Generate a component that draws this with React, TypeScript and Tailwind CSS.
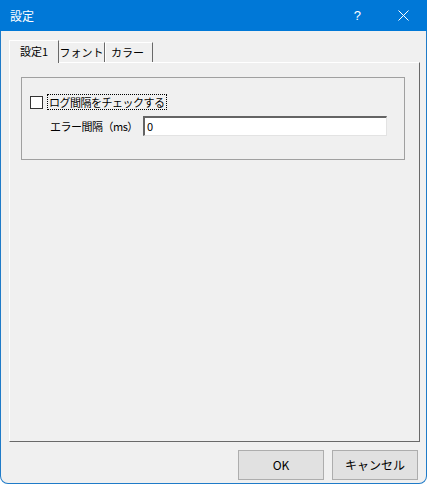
import React from "react";

const font = { fontFamily: '"Noto Sans CJK JP", "Noto Sans", sans-serif' };

export default function App() {
  return (
    <div
      className="w-[427px] h-[484px] bg-[#1f7bc8] rounded-b-[8px] overflow-hidden flex flex-col text-[11px] text-black"
      style={font}
    >
      {/* title bar */}
      <div className="h-[31px] bg-[#0078d7] flex items-center text-white shrink-0">
        <span className="ml-[10px] text-[12px] leading-none">設定</span>
        <span className="ml-auto mr-[37px] text-[13px] leading-none" style={{ fontFamily: '"Liberation Sans", sans-serif' }}>?</span>
        <svg width="11" height="11" viewBox="0 0 11 11" className="mr-[18px]">
          <path d="M0.5 0.5 L10.5 10.5 M10.5 0.5 L0.5 10.5" stroke="white" strokeWidth="1" />
        </svg>
      </div>
      {/* client */}
      <div className="flex-1 mx-[1px] mb-[1px] bg-[#f0f0f0] rounded-b-[7px] flex flex-col">
        {/* tabs */}
        <div className="flex items-end ml-[8px] mt-[9px] h-[22px] relative z-10">
          <div className="w-[50px] bg-[#f0f0f0] border-l border-t border-white border-r border-r-[#696969] flex items-center justify-center pb-[2px] -mb-[1px] h-[23px]">
            設定1
          </div>
          <div className="h-[20px] w-[46px] border-t border-white border-r border-r-[#696969] flex items-center justify-center">
            フォント
          </div>
          <div className="h-[20px] w-[48px] border-l border-t border-white border-r border-r-[#696969] flex items-center pl-[5px]">
            カラー
          </div>
        </div>
        {/* panel */}
        <div className="ml-[8px] w-[411px] h-[380px] border-l border-t border-white border-r border-b border-r-[#696969] border-b-[#696969] pt-[14px] pl-[11px]">
          <div className="w-[384px] h-[83px] border border-[#a0a0a0] pt-[17px] pl-[8px]">
            <div className="flex items-center h-[14px]">
              <div className="w-[13px] h-[13px] bg-white border border-[#333333]" />
              <span className="ml-[4px] px-[1px] border border-dotted border-black leading-[14px] tracking-[-0.5px]">ログ間隔をチェックする</span>
            </div>
            <div className="flex items-center mt-[7px]">
              <span className="ml-[20px] w-[93px] leading-none tracking-[-0.5px]">エラー間隔（ms）</span>
              <div className="w-[244px] h-[20px] bg-white border-l-2 border-t-2 border-[#646464] border-r border-b border-r-[#e3e3e3] border-b-[#e3e3e3] flex items-center pl-[2px]">
                0
              </div>
            </div>
          </div>
        </div>
        {/* buttons */}
        <div className="flex justify-end mt-[8px] mr-[8px] gap-[8px]">
          <button className="w-[86px] h-[30px] bg-[#e1e1e1] border border-[#adadad] text-[12px]" style={font}>
            OK
          </button>
          <button className="w-[86px] h-[30px] bg-[#e1e1e1] border border-[#adadad] text-[12px]" style={font}>
            キャンセル
          </button>
        </div>
      </div>
    </div>
  );
}
